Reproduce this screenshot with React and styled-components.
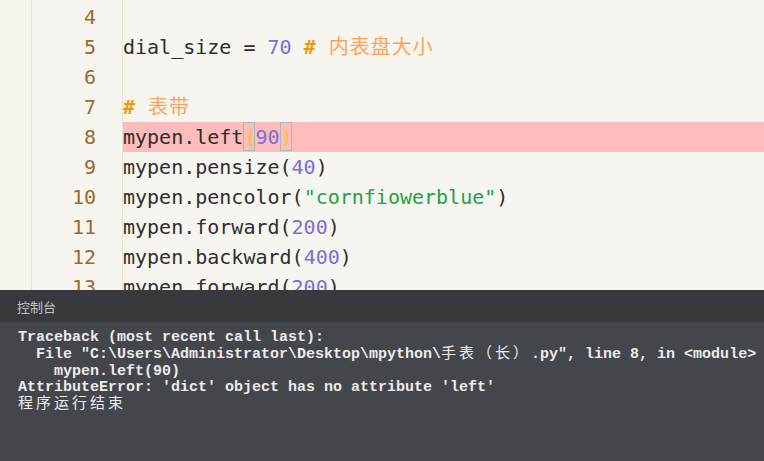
import React from 'react';
import styled, { createGlobalStyle } from 'styled-components';

const lines = [
    { n: 4, parts: [] },
    { n: 5, parts: [['plain', 'dial_size = '], ['num', '70'], ['plain', ' '], ['hash', '#'], ['comment', ' 内表盘大小']] },
    { n: 6, parts: [] },
    { n: 7, parts: [['hash', '#'], ['comment', ' 表带']] },
    { n: 8, error: true, parts: [['plain', 'mypen.left'], ['paren', '('], ['num', '90'], ['paren', ')']] },
    { n: 9, parts: [['plain', 'mypen.pensize('], ['num', '40'], ['plain', ')']] },
    { n: 10, parts: [['plain', 'mypen.pencolor('], ['str', '"cornfiowerblue"'], ['plain', ')']] },
    { n: 11, parts: [['plain', 'mypen.forward('], ['num', '200'], ['plain', ')']] },
    { n: 12, parts: [['plain', 'mypen.backward('], ['num', '400'], ['plain', ')']] },
    { n: 13, parts: [['plain', 'mypen.forward('], ['num', '200'], ['plain', ')']] },
];

const App = () => {
    return (
        <Page>
            <GlobalStyle />
            <Editor>
                <Fold />
                <Gutter>
                    {lines.map((l) => (
                        <LineNo key={l.n}>{l.n}</LineNo>
                    ))}
                </Gutter>
                <Code>
                    {lines.map((l) => (
                        <CodeLine key={l.n} $error={l.error}>
                            {l.parts.map(([kind, text], i) => {
                                if (kind === 'paren') return <Bracket key={i}>{text}</Bracket>;
                                return <Token key={i} $kind={kind}>{text}</Token>;
                            })}
                        </CodeLine>
                    ))}
                </Code>
            </Editor>
            <Console>
                <ConsoleHeader>控制台</ConsoleHeader>
                <ConsoleBody>
                    <Out>Traceback (most recent call last):</Out>
                    <Out>
                        {'  File "C:\\Users\\Administrator\\Desktop\\mpython\\'}
                        <Wide>手表（长）</Wide>
                        {'.py", line 8, in <module>'}
                    </Out>
                    <Out>{'    mypen.left(90)'}</Out>
                    <Out>AttributeError: 'dict' object has no attribute 'left'</Out>
                    <Out><Wide>程序运行结束</Wide></Out>
                </ConsoleBody>
            </Console>
        </Page>
    );
};

export default App;

const GlobalStyle = createGlobalStyle`
    html, body {
        margin: 0;
        padding: 0;
        background: #43464b;
        overflow: hidden;
    }
`;

const Page = styled.div`
    width: 764px;
    height: 461px;
    display: flex;
    flex-direction: column;
    overflow: hidden;
`;

const Editor = styled.div`
    height: 290px;
    flex-shrink: 0;
    display: flex;
    align-items: flex-start;
    background: #f7f5f0;
    overflow: hidden;
`;

const Fold = styled.div`
    width: 31px;
    height: 100%;
    flex-shrink: 0;
    background: #f5f3ec;
    border-right: 1px solid #e6e1d3;
`;

const Gutter = styled.div`
    width: 91px;
    height: 100%;
    flex-shrink: 0;
    padding: 2px 26px 0 0;
    box-sizing: border-box;
    border-right: 1px solid #ece3cf;
    text-align: right;
`;

const LineNo = styled.div`
    height: 30px;
    line-height: 30px;
    font-family: "DejaVu Sans Mono", monospace;
    font-size: 20px;
    color: #9c6a2c;
`;

const Code = styled.div`
    flex: 1;
    padding-top: 2px;
`;

const CodeLine = styled.div`
    height: 30px;
    line-height: 30px;
    white-space: pre;
    font-family: "DejaVu Sans Mono", "Noto Sans CJK SC", monospace;
    font-size: 20px;
    color: #2e2e2e;
    background: ${(p) => (p.$error ? '#ffbcbc' : 'transparent')};
`;

const tokenColors = {
    plain: '#2e2e2e',
    num: '#7b70d4',
    hash: '#f2980f',
    comment: '#fba35c',
    str: '#21a14e',
};

const Token = styled.span`
    color: ${(p) => tokenColors[p.$kind]};
    font-weight: ${(p) => (p.$kind === 'hash' ? 700 : 400)};
    letter-spacing: ${(p) => (p.$kind === 'comment' ? '1px' : '0')};
`;

const Bracket = styled.span`
    display: inline-block;
    height: 29px;
    line-height: 29px;
    vertical-align: top;
    box-sizing: border-box;
    border: 1px solid #a9b9b7;
    color: #f7c21b;
    width: 12px;
`;

const Console = styled.div`
    flex: 1;
    display: flex;
    flex-direction: column;
    background: #43464b;
`;

const ConsoleHeader = styled.div`
    height: 32px;
    flex-shrink: 0;
    display: flex;
    align-items: center;
    padding-left: 17px;
    background: #37393d;
    color: #c2c2c2;
    font-family: "Noto Sans CJK SC", sans-serif;
    font-size: 13px;
`;

const ConsoleBody = styled.div`
    padding: 7px 0 0 18px;
`;

const Out = styled.div`
    height: 16.8px;
    line-height: 17px;
    white-space: pre;
    font-family: "Liberation Mono", "Noto Sans CJK SC", monospace;
    font-size: 15px;
    font-weight: 700;
    color: #ececec;
`;

const Wide = styled.span`
    letter-spacing: 3px;
    font-weight: 400;
`;
